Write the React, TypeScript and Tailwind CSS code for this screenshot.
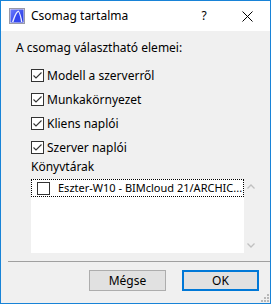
import React from "react";

const font = { fontFamily: '"Noto Sans", "Open Sans", sans-serif' };

const Check = ({ checked }: { checked: boolean }) => (
  <span className="w-[13px] h-[13px] border border-[#333333] bg-white flex items-center justify-center shrink-0">
    {checked && (
      <svg width="11" height="11" viewBox="0 0 11 11">
        <path d="M1.5 5.5 L4 8 L9.5 2.5" fill="none" stroke="#333333" strokeWidth="1.1" />
      </svg>
    )}
  </span>
);

const AppIcon = () => (
  <svg width="16" height="16" viewBox="0 0 16 16">
    <defs>
      <linearGradient id="g" x1="0" y1="0" x2="1" y2="1">
        <stop offset="0" stopColor="#6b7bff" />
        <stop offset="1" stopColor="#1a2ee0" />
      </linearGradient>
    </defs>
    <rect x="0.5" y="0.5" width="15" height="15" fill="#e8e8f0" stroke="#9a9aa8" />
    <rect x="1.5" y="1.5" width="13" height="13" fill="url(#g)" />
    <path d="M3 14 C5 8 7 3 9.5 2.5 C11 4 12.5 9 13.5 14 Z" fill="#ffffff" opacity="0.9" />
    <path d="M4.5 14 C6 9 8 4.5 9.5 4 C10.5 6 11.5 10 12 14 Z" fill="#3347f0" />
  </svg>
);

export default function App() {
  const items = [
    "Modell a szerverről",
    "Munkakörnyezet",
    "Kliens naplói",
    "Szerver naplói",
  ];

  return (
    <div
      className="w-[271px] h-[304px] border border-[#1883d7] bg-[#f0f0f0] flex flex-col text-[12px] text-black"
      style={font}
    >
      <div className="h-[30px] bg-white flex items-center shrink-0">
        <div className="ml-[8px]">
          <AppIcon />
        </div>
        <span className="ml-[6px] text-[12px]">Csomag tartalma</span>
        <span className="ml-auto w-[16px] text-center mr-[30px]">?</span>
        <svg className="mr-[17px]" width="11" height="11" viewBox="0 0 11 11">
          <path d="M0.5 0.5 L10.5 10.5 M10.5 0.5 L0.5 10.5" stroke="#000" strokeWidth="1" />
        </svg>
      </div>

      <div className="flex-1 flex flex-col pl-[15px] pr-[12px]">
        <div className="mt-[9px] leading-[16px]">A csomag választható elemei:</div>
        <div className="flex flex-col mt-[13px] gap-[11px] pl-[15px]">
          {items.map((t) => (
            <div key={t} className="flex items-center gap-[3px] h-[13px] leading-[16px]">
              <Check checked />
              <span>{t}</span>
            </div>
          ))}
        </div>
        <div className="mt-[5px] pl-[15px] leading-[16px]">Könyvtárak</div>
        <div className="mt-[4px] ml-[15px] flex h-[74px]">
          <div className="w-[213px] bg-white">
            <div className="h-[18px] border border-dotted border-black flex items-center pl-[5px] gap-[8px]">
              <Check checked={false} />
              <span className="whitespace-nowrap leading-[16px] text-[11px]">
                Eszter-W10 - BIMcloud 21/ARCHIC...
              </span>
            </div>
          </div>
          <div className="w-[14px] flex flex-col items-center justify-between py-[5px]">
            <svg width="8" height="5" viewBox="0 0 8 5">
              <path d="M0.5 4.5 L4 1 L7.5 4.5" fill="none" stroke="#c0c0c0" strokeWidth="1.3" />
            </svg>
            <svg width="8" height="5" viewBox="0 0 8 5">
              <path d="M0.5 0.5 L4 4 L7.5 0.5" fill="none" stroke="#c0c0c0" strokeWidth="1.3" />
            </svg>
          </div>
        </div>
      </div>

      <div className="ml-[7px] h-px bg-[#a0a0a0] shrink-0" />
      <div className="relative flex justify-end gap-[16px] pr-[11px] pt-[8px] pb-[12px] shrink-0">
        <button className="w-[77px] h-[21px] bg-[#e1e1e1] border border-[#adadad] leading-[16px]">
          Mégse
        </button>
        <button className="w-[77px] h-[21px] bg-[#e1e1e1] border-2 border-[#0078d7] leading-[16px]">
          OK
        </button>
        <svg className="absolute right-[1px] bottom-[1px]" width="8" height="8" viewBox="0 0 8 8">
          <rect x="6" y="0" width="2" height="2" fill="#b8b8b8" />
          <rect x="3" y="3" width="2" height="2" fill="#b8b8b8" />
          <rect x="6" y="3" width="2" height="2" fill="#b8b8b8" />
          <rect x="0" y="6" width="2" height="2" fill="#b8b8b8" />
          <rect x="3" y="6" width="2" height="2" fill="#b8b8b8" />
          <rect x="6" y="6" width="2" height="2" fill="#b8b8b8" />
        </svg>
      </div>
    </div>
  );
}
